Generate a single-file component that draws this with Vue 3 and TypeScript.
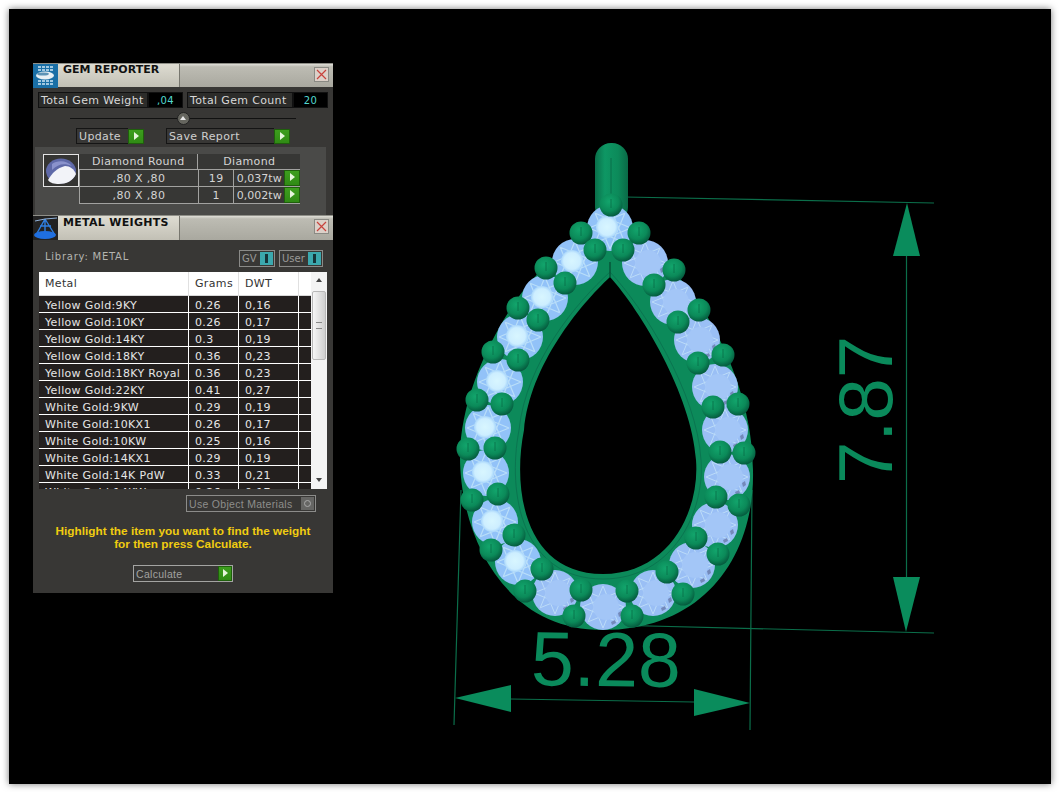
<script setup lang="ts">
type Point = [number, number];

const gemRows = [
  { size: ',80 X ,80', count: '19', weight: '0,037tw' },
  { size: ',80 X ,80', count: '1', weight: '0,002tw' },
];

const metals = [
  ['Yellow Gold:9KY', '0.26', '0,16'],
  ['Yellow Gold:10KY', '0.26', '0,17'],
  ['Yellow Gold:14KY', '0.3', '0,19'],
  ['Yellow Gold:18KY', '0.36', '0,23'],
  ['Yellow Gold:18KY Royal', '0.36', '0,23'],
  ['Yellow Gold:22KY', '0.41', '0,27'],
  ['White Gold:9KW', '0.29', '0,19'],
  ['White Gold:10KX1', '0.26', '0,17'],
  ['White Gold:10KW', '0.25', '0,16'],
  ['White Gold:14KX1', '0.29', '0,19'],
  ['White Gold:14K PdW', '0.33', '0,21'],
  ['White Gold:14KW', '0.26', '0,17'],
];

const brightStones: Point[] = [
  [610, 228], [575, 262], [545, 298], [520, 337], [500, 382], [488, 428],
  [486, 473], [495, 522], [518, 562],
];
const softStones: Point[] = [
  [555, 593], [603, 607], [653, 593], [692, 565], [715, 525], [727, 477],
  [725, 430], [715, 387], [697, 340], [673, 302], [645, 263],
];

const prongs: Point[] = [
  [611, 205], [581, 233], [595, 250], [639, 233], [623, 250], [546, 268],
  [565, 283], [674, 270], [654, 285], [518, 308], [538, 320], [699, 310],
  [678, 322], [493, 352], [518, 360], [723, 355], [698, 363], [477, 400],
  [502, 404], [738, 404], [713, 407], [468, 449], [495, 448], [744, 453],
  [720, 452], [472, 500], [498, 494], [739, 505], [716, 497], [514, 535],
  [491, 550], [696, 538], [718, 554], [542, 569], [525, 591], [667, 572],
  [683, 594], [581, 590], [574, 616], [627, 591], [632, 616],
];

// eight pointed star used for the stone facets
const facetPath = (() => {
  let d = '';
  for (let i = 0; i < 8; i++) {
    const a = (i * Math.PI) / 4;
    const b = ((i + 3) * Math.PI) / 4;
    d += `M${(Math.cos(a) * 21).toFixed(1)} ${(Math.sin(a) * 21).toFixed(1)}L${(Math.cos(b) * 21).toFixed(1)} ${(Math.sin(b) * 21).toFixed(1)}`;
  }
  return d;
})();
</script>

<template>
  <div class="page">
    <div class="stage">
      <svg class="model" viewBox="9 9 1042 775" xmlns="http://www.w3.org/2000/svg">
        <defs>
          <radialGradient id="prong" cx="42%" cy="35%" r="70%">
            <stop offset="0" stop-color="#12a56c" />
            <stop offset="0.6" stop-color="#0b8a59" />
            <stop offset="1" stop-color="#04533a" />
          </radialGradient>
          <radialGradient id="table">
            <stop offset="0" stop-color="#d8f6ff" />
            <stop offset="0.75" stop-color="#cdeeff" />
            <stop offset="1" stop-color="#a9d6fb" />
          </radialGradient>
          <linearGradient id="bail" x1="0" x2="1" y1="0" y2="0">
            <stop offset="0" stop-color="#0a6f4a" />
            <stop offset="0.3" stop-color="#0e9764" />
            <stop offset="0.7" stop-color="#0c8a5a" />
            <stop offset="1" stop-color="#0a6a47" />
          </linearGradient>
          <g id="stone-bright">
            <circle r="23" fill="#92c2f8" />
            <path :d="facetPath" fill="none" stroke="#b9def9" stroke-width="1.2" />
            <circle cx="-3" cy="-1" r="11" fill="url(#table)" />
          </g>
          <g id="stone-soft">
            <circle r="23" fill="#9abff5" />
            <path :d="facetPath" fill="none" stroke="#bcdcf9" stroke-width="1" />
            <circle cx="3" cy="0" r="13" fill="#a3c6f7" />
            <path d="M8 15l4-2 1 3-4 2zM15 6l3-2 1 4-3 2z" fill="#7389ba" />
          </g>
        </defs>

        <g class="dims">
          <path d="M625 197 934 203M906.5 255V580M610 625 934 633" />
          <path d="M461 490 454 725M752 490 750 730M511 699 694 702" />
        </g>
        <path d="M907 203 920 256H893Z" fill="#0a8c5c" />
        <path d="M906 632 893 577H920Z" fill="#0a8c5c" />
        <path d="M455 698 511 685V712Z" fill="#0a8c5c" />
        <path d="M750 703 694 689V716Z" fill="#0a8c5c" />
        <text class="dim-text wide" x="531" y="686" transform="rotate(0.6 600 660)">5.28</text>
        <text class="dim-text" transform="translate(892 484) rotate(-90)">7.87</text>

        <rect x="595" y="143" width="33" height="80" rx="16" fill="url(#bail)" />
        <path d="M611 158V195" stroke="#0a6f4a" stroke-width="1" />

        <path
          fill="#0c8a5a"
          fill-rule="evenodd"
          d="M611 206C585 225 552 258 530 282C495 325 460 395 460 457C460 530 500 630 603 630C705 630 755 555 753 470C753 395 715 320 683 282C660 255 635 225 611 206ZM610 277C580 305 530 365 524 430C512 490 525 574 603 574C670 574 700 510 696 460C692 395 640 310 610 277Z"
        />
        <path
          fill="none"
          stroke="#0a7550"
          stroke-width="1"
          d="M610 272C577 302 526 362 519 430C507 494 522 579 603 579C673 579 705 512 701 460C697 392 643 307 610 272Z"
        />
        <path d="M610 262V277" stroke="#06543a" stroke-width="1.5" />

        <use v-for="(s, i) in brightStones" :key="'b' + i" href="#stone-bright" :x="s[0]" :y="s[1]" />
        <use v-for="(s, i) in softStones" :key="'s' + i" href="#stone-soft" :x="s[0]" :y="s[1]" />

        <g v-for="(p, i) in prongs" :key="'p' + i">
          <circle :cx="p[0]" :cy="p[1]" r="11.5" fill="url(#prong)" />
          <path :d="`M${p[0]} ${p[1] - 6}v9`" stroke="#086c48" stroke-width="0.8" />
        </g>
      </svg>

      <div class="window">
        <header class="titlebar">
          <svg class="title-icon" viewBox="0 0 25 24">
            <rect width="25" height="24" fill="#1a6fa6" />
            <path d="M5 3h15M5 6h15M5 17h15M5 20h15" stroke="#cfe8f5" stroke-width="1.5" stroke-dasharray="3 1" />
            <ellipse cx="12" cy="11.5" rx="9" ry="4" fill="#e8f0f4" />
            <ellipse cx="10" cy="10" rx="6" ry="1.6" fill="#5d93b5" />
          </svg>
          <h2 class="title">GEM REPORTER</h2>
          <span class="close">
            <svg viewBox="0 0 13 13"><path d="M2 2 11 11M11 2 2 11" stroke="#c8423c" stroke-width="1.2" /></svg>
          </span>
        </header>

        <section class="gem-body">
          <div class="totals">
            <span class="total-label first">Total Gem Weight</span>
            <span class="total-value first-value">,04</span>
            <span class="total-label second">Total Gem Count</span>
            <span class="total-value second-value">20</span>
          </div>
          <div class="slider"><span class="knob"></span></div>
          <div class="actions">
            <span class="action update">Update</span>
            <span class="go"></span>
            <span class="action save">Save Report</span>
            <span class="go"></span>
          </div>
          <div class="gem-group">
            <div class="gem-thumb">
              <svg viewBox="0 0 34 32" width="34" height="32">
                <ellipse cx="17" cy="16" rx="15" ry="12.5" fill="#5f69a8" />
                <path d="M4 25C8 18 13 13 21 11C26 11 30 14 32 19C29 26 22 29 15 29C10 29 6 28 4 25Z" fill="#f2f3f8" />
                <path d="M8 9C13 5 23 5 28 11C20 8 14 9 8 15Z" fill="#8a92cc" />
              </svg>
            </div>
            <div class="gem-table">
              <div class="gem-head">
                <span class="gem-name">Diamond Round</span>
                <span class="gem-kind">Diamond</span>
              </div>
              <div v-for="(row, i) in gemRows" :key="i" class="gem-row">
                <span class="gem-size">{{ row.size }}</span>
                <span class="gem-count">{{ row.count }}</span>
                <span class="gem-weight">{{ row.weight }}</span>
                <span class="go go-row"></span>
              </div>
            </div>
          </div>
        </section>

        <header class="titlebar metal-bar">
          <svg class="title-icon" viewBox="0 0 25 24">
            <path d="M12 3 3 19M12 3 22 19M12 3V19M7 10H18" stroke="#2f7fe0" stroke-width="1.4" fill="none" />
            <ellipse cx="12" cy="19" rx="11" ry="4" fill="#1f6fe0" />
            <path d="M2 5 12 3 24 2" stroke="#8fb0d8" stroke-width="1" fill="none" />
          </svg>
          <h2 class="title">METAL WEIGHTS</h2>
          <span class="close">
            <svg viewBox="0 0 13 13"><path d="M2 2 11 11M11 2 2 11" stroke="#c8423c" stroke-width="1.2" /></svg>
          </span>
        </header>

        <section class="metal-body">
          <div class="library">
            <span class="library-name">Library: METAL</span>
            <span class="toggle gv">GV<i></i></span>
            <span class="toggle user">User<i></i></span>
          </div>

          <div class="metal-table">
            <div class="metal-grid">
              <div class="metal-row metal-head">
                <span>Metal</span><span>Grams</span><span>DWT</span><span></span>
              </div>
              <div v-for="m in metals" :key="m[0]" class="metal-row">
                <span>{{ m[0] }}</span><span>{{ m[1] }}</span><span>{{ m[2] }}</span><span></span>
              </div>
            </div>
            <div class="scrollbar">
              <span class="arrow-up"></span>
              <span class="thumb"></span>
              <span class="arrow-down"></span>
            </div>
          </div>

          <div class="object-row">
            <span class="object-box">Use Object Materials<b></b></span>
          </div>

          <p class="hint">Highlight the item you want to find the weight<br />for then press Calculate.</p>

          <div class="calc-row">
            <span class="calc">Calculate<span class="go go-calc"></span></span>
          </div>
        </section>
      </div>
    </div>
  </div>
</template>

<style>
html, body {
  background: #fff;
}
</style>

<style scoped>
.page {
  width: 1059px;
  height: 792px;
  box-sizing: border-box;
  padding: 9px 8px 8px 9px;
  overflow: hidden;
}
.stage {
  position: relative;
  width: 1042px;
  height: 775px;
  background: #000;
  box-shadow: 0 0 7px rgba(0, 0, 0, 0.55);
}
.model {
  position: absolute;
  inset: 0;
  width: 1042px;
  height: 775px;
}
.dims path {
  fill: none;
  stroke: #0b6e4a;
  stroke-width: 1.2;
}
.dim-text {
  font-family: "Liberation Sans", Arial, sans-serif;
  font-size: 76px;
  fill: #0a8a5b;
}
.wide {
  font-size: 77px;
}

.window {
  position: absolute;
  left: 24px;
  top: 54px;
  width: 300px;
  height: 530px;
  display: flex;
  flex-direction: column;
  background: #383735;
  font-family: "DejaVu Sans", Verdana, sans-serif;
  font-size: 11px;
  letter-spacing: 0.35px;
  color: #d4d4d4;
}
.titlebar {
  position: relative;
  flex: none;
  height: 24px;
  display: flex;
  background: linear-gradient(#e0dfd8, #bdbcb3 12%, #a9a89f 100%);
  border-top: 1px solid #8f8f88;
  box-sizing: border-box;
}
.metal-bar {
  height: 25px;
}
.title-icon {
  flex: none;
  width: 25px;
  height: 24px;
  background: #222;
}
.title {
  margin: 0;
  width: 122px;
  height: 100%;
  box-sizing: border-box;
  padding: 0 0 0 5px;
  font-size: 11px;
  line-height: 12px;
  font-weight: bold;
  letter-spacing: 0;
  color: #111;
  background: linear-gradient(#dedcd2, #c2c0b5);
  border-right: 1px solid #77766e;
  font-family: "DejaVu Sans", Verdana, sans-serif;
}
.metal-bar .title {
  line-height: 14px;
  letter-spacing: 0.3px;
}
.close {
  position: absolute;
  right: 4px;
  top: 3px;
  width: 13px;
  height: 13px;
  border: 1px solid #8a8a84;
  background: #dcd0c8;
}
.close svg {
  display: block;
  width: 13px;
  height: 13px;
}

.gem-body {
  flex: none;
  height: 128px;
  box-sizing: border-box;
  padding: 5px 2px 0;
  display: flex;
  flex-direction: column;
}
.totals {
  display: flex;
  height: 16px;
  padding-left: 3px;
}
.total-label,
.total-value {
  box-sizing: border-box;
  height: 16px;
  line-height: 15px;
  border: 1px solid #111;
}
.total-label {
  padding-left: 2px;
  background: #2c2c2a;
  color: #d8d8d8;
  white-space: nowrap;
  overflow: hidden;
}
.first { width: 110px; }
.second { width: 106px; margin-left: 4px; }
.total-value {
  background: #000;
  color: #53d8d0;
  text-align: center;
  font-size: 10px;
}
.first-value { width: 35px; }
.second-value { width: 35px; }
.slider {
  position: relative;
  height: 1px;
  margin: 10px 0 0 35px;
  width: 226px;
  background: #111;
}
.knob {
  position: absolute;
  left: 107px;
  top: -6px;
  width: 13px;
  height: 13px;
  border-radius: 50%;
  background: #66665f;
  border: 1px solid #222;
  box-sizing: border-box;
}
.knob::after {
  content: "";
  position: absolute;
  left: 2px;
  top: 3px;
  border: 3.5px solid transparent;
  border-top: 0;
  border-bottom: 4px solid #e8e8e8;
}
.actions {
  display: flex;
  align-items: center;
  height: 16px;
  margin: 9px 0 0 41px;
}
.action {
  box-sizing: border-box;
  height: 16px;
  line-height: 15px;
  padding-left: 2px;
  color: #cfcfcf;
  border-left: 1px solid #151515;
  border-top: 1px solid #151515;
  border-bottom: 1px solid #151515;
}
.update { width: 52px; }
.save { width: 108px; margin-left: 22px; }
.go {
  position: relative;
  display: block;
  flex: none;
  width: 16px;
  height: 15px;
  background: linear-gradient(#3e9f1e, #2f8a14);
  box-shadow: inset 0 0 0 1px #1f5f0c;
}
.go::after {
  content: "";
  position: absolute;
  left: 6px;
  top: 3px;
  border: 4px solid transparent;
  border-right: 0;
  border-left: 5px solid #e6f5dc;
}
.gem-group {
  display: flex;
  align-items: flex-start;
  margin-top: 3px;
  margin-left: 0;
  width: 291px;
  height: 68px;
  box-sizing: border-box;
  padding: 7px 0 0 8px;
  background: #4a4a48;
}
.gem-thumb {
  box-sizing: border-box;
  width: 36px;
  height: 33px;
  border: 1px solid #e4e4e4;
  background: #353533;
  display: flex;
  align-items: center;
  justify-content: center;
}
.gem-table {
  width: 221px;
  color: #d4d4d4;
}
.gem-head,
.gem-row {
  display: flex;
  height: 16px;
  line-height: 16px;
  text-align: center;
  box-sizing: border-box;
  border-bottom: 1px solid #a2a2a0;
  background: #373735;
}
.gem-row {
  height: 17px;
  line-height: 17px;
  border-left: 1px solid #a2a2a0;
}
.gem-name { width: 119px; border-right: 1px solid #a2a2a0; }
.gem-kind { width: 102px; }
.gem-size { width: 119px; border-right: 1px solid #a2a2a0; }
.gem-count { width: 35px; border-right: 1px solid #a2a2a0; }
.gem-weight { width: 50px; white-space: nowrap; overflow: hidden; letter-spacing: 0; }
.go-row { height: 16px; }

.metal-body {
  flex: 1;
  display: flex;
  flex-direction: column;
  padding: 0 6px;
  background: #383735;
}
.library {
  position: relative;
  display: flex;
  align-items: center;
  height: 32px;
}
.library-name {
  padding-left: 6px;
  font-size: 10px;
  letter-spacing: 0.75px;
  color: #b4b4b0;
  margin-right: auto;
}
.toggle {
  display: flex;
  align-items: center;
  justify-content: space-between;
  box-sizing: border-box;
  height: 17px;
  margin-top: 4px;
  padding: 0 1px 0 2px;
  border: 1px solid #8a8a88;
  font-size: 10px;
  letter-spacing: 0;
  color: #9a9a98;
}
.toggle i {
  position: relative;
  width: 13px;
  height: 13px;
  background: #3ba8ae;
}
.toggle i::after {
  content: "";
  position: absolute;
  left: 5px;
  top: 2px;
  width: 3px;
  height: 9px;
  background: #16343a;
}
.gv { width: 36px; margin-right: 4px; }
.user { width: 44px; margin-right: 4px; }
.metal-table {
  display: flex;
  height: 217px;
  overflow: hidden;
  background: #fff;
}
.metal-grid {
  width: 272px;
  flex: none;
}
.metal-row {
  display: grid;
  grid-template-columns: 150px 50px 60px 12px;
  height: 17px;
  box-sizing: border-box;
  border-bottom: 1px solid #fff;
  background: #231f1e;
  color: #e6e6e6;
}
.metal-row span {
  padding: 3px 0 0 6px;
  line-height: 14px;
  white-space: nowrap;
  box-sizing: border-box;
  border-right: 1px solid #fff;
}
.metal-row span:last-child {
  border-right: 0;
  padding: 0;
}
.metal-head {
  height: 24px;
  background: #fff;
  color: #333;
  border-bottom: 1px solid #d8d8d8;
}
.metal-head span {
  padding-top: 5px;
  border-right: 1px solid #e0e0e0;
}
.scrollbar {
  position: relative;
  flex: 1;
  background: #f4f4f4;
}
.thumb {
  position: absolute;
  left: 1px;
  top: 19px;
  width: 14px;
  height: 69px;
  box-sizing: border-box;
  border: 1px solid #b8b8b8;
  border-radius: 2px;
  background: linear-gradient(90deg, #f6f6f6, #cfcfcf);
}
.thumb::after {
  content: "";
  position: absolute;
  left: 3px;
  top: 30px;
  width: 6px;
  height: 5px;
  border-top: 1px solid #888;
  border-bottom: 1px solid #888;
}
.arrow-up,
.arrow-down {
  position: absolute;
  left: 5px;
  border: 3px solid transparent;
}
.arrow-up {
  top: 6px;
  border-top: 0;
  border-bottom: 4px solid #444;
}
.arrow-down {
  top: 206px;
  border-bottom: 0;
  border-top: 4px solid #444;
}
.object-row {
  display: flex;
  justify-content: flex-end;
  margin-top: 6px;
  padding-right: 11px;
}
.object-box {
  position: relative;
  box-sizing: border-box;
  width: 130px;
  height: 17px;
  padding-left: 2px;
  border: 1px solid #8c8c8a;
  font-family: "Liberation Sans", Arial, sans-serif;
  font-size: 10.5px;
  letter-spacing: 0.3px;
  line-height: 17px;
  color: #8e8e8c;
  white-space: nowrap;
}
.object-box b {
  position: absolute;
  right: 1px;
  top: 1px;
  width: 13px;
  height: 13px;
  background: #666664;
}
.object-box b::after {
  content: "";
  position: absolute;
  left: 3px;
  top: 3px;
  width: 5px;
  height: 5px;
  border: 1px solid #aaa;
  border-radius: 50%;
}
.hint {
  margin: 13px 0 0;
  text-align: center;
  font-family: "Liberation Sans", Arial, sans-serif;
  font-weight: bold;
  font-size: 11.8px;
  letter-spacing: 0;
  line-height: 13px;
  color: #f0cc10;
}
.calc-row {
  display: flex;
  justify-content: center;
  margin-top: 14px;
}
.calc {
  position: relative;
  display: block;
  box-sizing: border-box;
  width: 100px;
  height: 17px;
  padding-left: 2px;
  border: 1px solid #a4a4a2;
  font-family: "Liberation Sans", Arial, sans-serif;
  font-size: 10.5px;
  letter-spacing: 0.3px;
  line-height: 17px;
  color: #a2a2a0;
}
.go-calc {
  position: absolute;
  right: 0;
  top: 0;
  width: 14px;
  height: 15px;
}
.go-calc::after {
  left: 5px;
}
</style>
